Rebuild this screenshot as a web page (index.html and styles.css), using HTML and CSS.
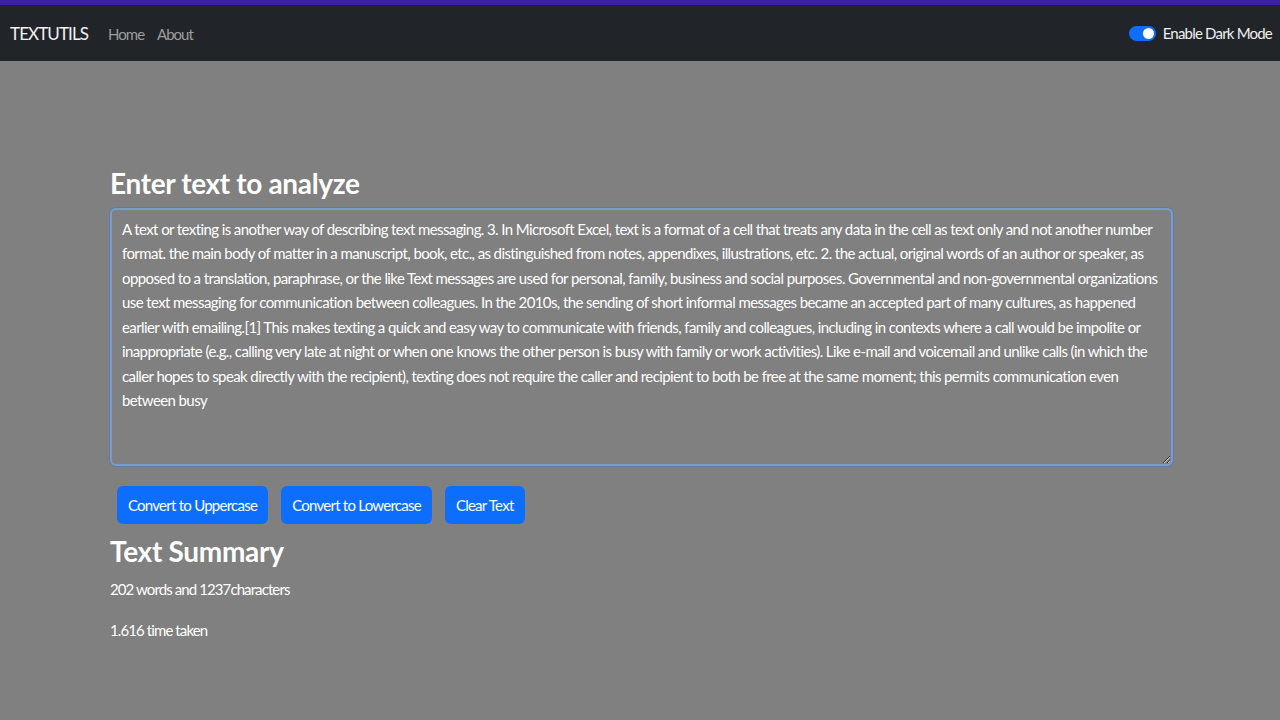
FILE: index.html
```html
<!DOCTYPE html>
<html lang="en">
<head>
<meta charset="utf-8">
<title>TextUtils</title>
<link rel="stylesheet" href="styles.css">
</head>
<body>
<div class="topline"></div>
<nav class="navbar">
  <a class="brand" href="#">TEXTUTILS</a>
  <ul class="nav-links">
    <li><a href="#">Home</a></li>
    <li><a href="#">About</a></li>
  </ul>
  <label class="switch">
    <span class="switch-track"><span class="switch-knob"></span></span>
    <span class="switch-label">Enable Dark Mode</span>
  </label>
</nav>
<main class="container">
  <h1 class="title">Enter text to analyze</h1>
  <textarea class="text-box" rows="10">A text or texting is another way of describing text messaging. 3. In Microsoft Excel, text is a format of a cell that treats any data in the cell as text only and not another number format. the main body of matter in a manuscript, book, etc., as distinguished from notes, appendixes, illustrations, etc. 2. the actual, original words of an author or speaker, as opposed to a translation, paraphrase, or the like Text messages are used for personal, family, business and social purposes. Governmental and non-governmental organizations use text messaging for communication between colleagues. In the 2010s, the sending of short informal messages became an accepted part of many cultures, as happened earlier with emailing.[1] This makes texting a quick and easy way to communicate with friends, family and colleagues, including in contexts where a call would be impolite or inappropriate (e.g., calling very late at night or when one knows the other person is busy with family or work activities). Like e-mail and voicemail and unlike calls (in which the caller hopes to speak directly with the recipient), texting does not require the caller and recipient to both be free at the same moment; this permits communication even between busy</textarea>
  <div class="actions">
    <button class="btn">Convert to Uppercase</button>
    <button class="btn">Convert to Lowercase</button>
    <button class="btn">Clear Text</button>
  </div>
  <h2 class="summary-title">Text Summary</h2>
  <p class="stat">202 words and 1237characters</p>
  <p class="stat">1.616 time taken</p>
</main>
</body>
</html>
```

FILE: styles.css
```css
* { box-sizing: border-box; }
html, body {
  margin: 0;
  padding: 0;
}
body {
  background: #808080;
  color: #ffffff;
  font-family: Lato, "Noto Sans", sans-serif;
  font-size: 16px;
  min-height: 720px;
}
.topline {
  height: 5px;
  background: #3b21a6;
}
.navbar {
  height: 56px;
  background: #212529;
  display: flex;
  align-items: center;
  padding: 0 8px 0 10px;
}
.brand {
  color: #f2f2f2;
  text-decoration: none;
  font-size: 17px;
  letter-spacing: -0.9px;
  margin-right: 20px;
}
.nav-links {
  display: flex;
  gap: 13px;
  list-style: none;
  margin: 0;
  padding: 0;
  flex: 1;
}
.nav-links a {
  color: #9c9d9f;
  text-decoration: none;
  font-size: 15px;
  letter-spacing: -1px;
}
.switch {
  display: flex;
  align-items: center;
  gap: 7px;
}
.switch-track {
  width: 27px;
  height: 15px;
  border-radius: 8px;
  background: #0d6efd;
  display: flex;
  justify-content: flex-end;
  align-items: center;
  padding: 2px;
}
.switch-knob {
  width: 11px;
  height: 11px;
  border-radius: 50%;
  background: #ffffff;
}
.switch-label {
  color: #f0f0f0;
  font-size: 15px;
  letter-spacing: -0.8px;
}
.container {
  width: 1063px;
  margin-left: 110px;
  padding-top: 106px;
}
.title {
  font-size: 28px;
  font-weight: 700;
  letter-spacing: -0.35px;
  margin: 0 0 7px 0;
  line-height: 1.2;
}
.text-box {
  display: block;
  width: 1063px;
  height: 258px;
  background: #808080;
  color: #ffffff;
  border: 2px solid #7a9ad3;
  border-radius: 6px;
  box-shadow: 0 0 0 1px rgba(13, 110, 253, 0.25);
  padding: 7px 10px;
  font-family: inherit;
  font-size: 15px;
  letter-spacing: -0.6px;
  line-height: 24.5px;
  resize: vertical;
  outline: none;
}
.actions {
  display: flex;
  gap: 13px;
  margin: 20px 0 0 7px;
}
.btn {
  background: #0d6efd;
  color: #ffffff;
  border: none;
  border-radius: 6px;
  height: 38px;
  padding: 0 11px;
  font-family: inherit;
  font-size: 15px;
  letter-spacing: -0.75px;
}
.summary-title {
  font-size: 28px;
  font-weight: 700;
  letter-spacing: -0.3px;
  margin: 11px 0 10px 0;
  line-height: 1.2;
}
.stat {
  font-size: 15px;
  letter-spacing: -0.9px;
  margin: 0 0 19px 0;
  line-height: 22px;
}
```
